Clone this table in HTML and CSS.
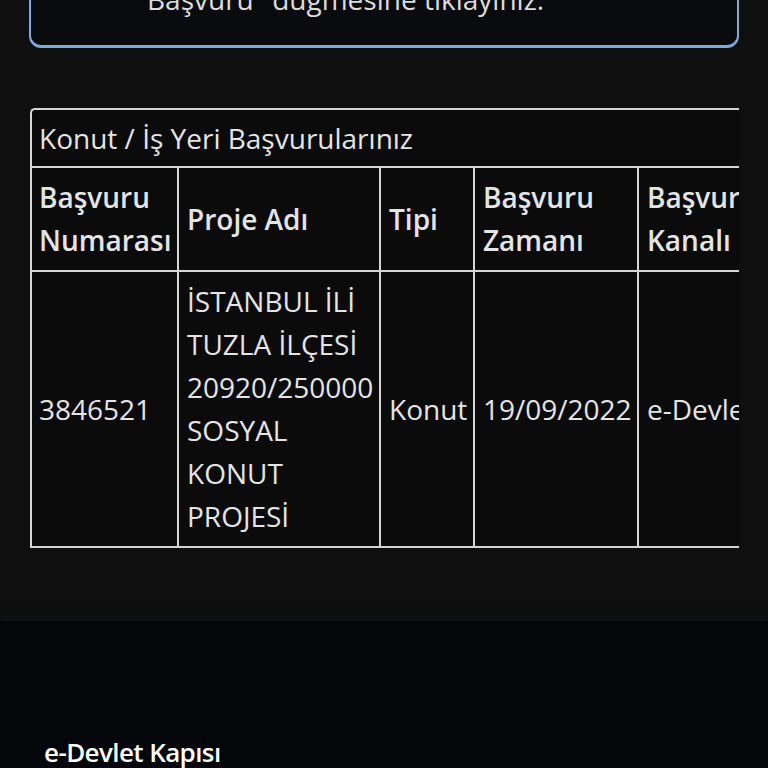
FILE: index.html
```html
<!DOCTYPE html>
<html lang="tr">
<head>
<meta charset="utf-8">
<title>Konut / İş Yeri Başvurularınız</title>
<link rel="stylesheet" href="styles.css">
</head>
<body>
<main class="page">
  <div class="notice">
    <p class="notice-text">Başvuru" düğmesine tıklayınız.</p>
  </div>
  <div class="table-wrap">
    <table class="apps">
      <colgroup>
        <col class="c-no">
        <col class="c-name">
        <col class="c-type">
        <col class="c-date">
        <col class="c-chan">
      </colgroup>
      <thead>
        <tr>
          <th class="caption" colspan="5">Konut / İş Yeri Başvurularınız</th>
        </tr>
        <tr class="head">
          <th>Başvuru Numarası</th>
          <th>Proje Adı</th>
          <th>Tipi</th>
          <th>Başvuru Zamanı</th>
          <th>Başvuru Kanalı</th>
        </tr>
      </thead>
      <tbody>
        <tr>
          <td>3846521</td>
          <td>İSTANBUL İLİ TUZLA İLÇESİ 20920/250000 SOSYAL KONUT PROJESİ</td>
          <td>Konut</td>
          <td>19/09/2022</td>
          <td>e-Devlet</td>
        </tr>
      </tbody>
    </table>
  </div>
</main>
<footer class="footer">
  <div class="footer-title">e-Devlet Kapısı</div>
</footer>
</body>
</html>
```
FILE: styles.css
```css
html, body {
  margin: 0;
  padding: 0;
}
body {
  background: #0f0f0f;
  color: #e4e4e4;
  font-family: "Open Sans", "Noto Sans", "Liberation Sans", sans-serif;
  font-size: 28px;
  line-height: 43px;
  height: 768px;
  overflow: hidden;
}
.page {
  padding: 0 29px 73px 29px;
}
.notice {
  margin-top: -40px;
  background: #0a0b0f;
  border: 2px solid #7fa9de;
  border-bottom-width: 3px;
  border-radius: 12px;
  padding: 16px 24px 24px 116px;
}
.notice-text {
  margin: 0;
  color: #dcdcdc;
}
.table-wrap {
  margin-top: 60px;
  margin-left: 1px;
  overflow: hidden;
}
.apps {
  table-layout: fixed;
  border-collapse: separate;
  border-spacing: 0;
  width: 800px;
  background: #0b0b0b;
  border-top: 2px solid #d6d6d6;
  border-left: 2px solid #d6d6d6;
  border-top-left-radius: 5px;
}
.c-no { width: 147px; }
.c-name { width: 202px; }
.c-type { width: 94px; }
.c-date { width: 164px; }
.c-chan { width: 193px; }
.apps th,
.apps td {
  padding: 8px 7px 8px 8px;
  border-right: 2px solid #d6d6d6;
  border-bottom: 2px solid #d6d6d6;
  text-align: left;
  vertical-align: middle;
  overflow: hidden;
}
.apps td:last-child,
.apps .head th:last-child {
  padding-right: 60px;
}
.apps th.caption {
  font-weight: 400;
  padding-top: 7px;
  padding-bottom: 6px;
  padding-left: 7px;
  border-top-left-radius: 4px;
}
.apps tr > :first-child {
  padding-left: 7px;
}
.head th {
  font-weight: 600;
}
.footer {
  background: #04060a;
  box-shadow: 0 -5px 10px rgba(20, 24, 28, 0.5);
  padding: 113px 44px 0 44px;
  height: 200px;
}
.footer-title {
  color: #ffffff;
  font-size: 26px;
  line-height: 36px;
  font-weight: 600;
  letter-spacing: -0.6px;
}
```
